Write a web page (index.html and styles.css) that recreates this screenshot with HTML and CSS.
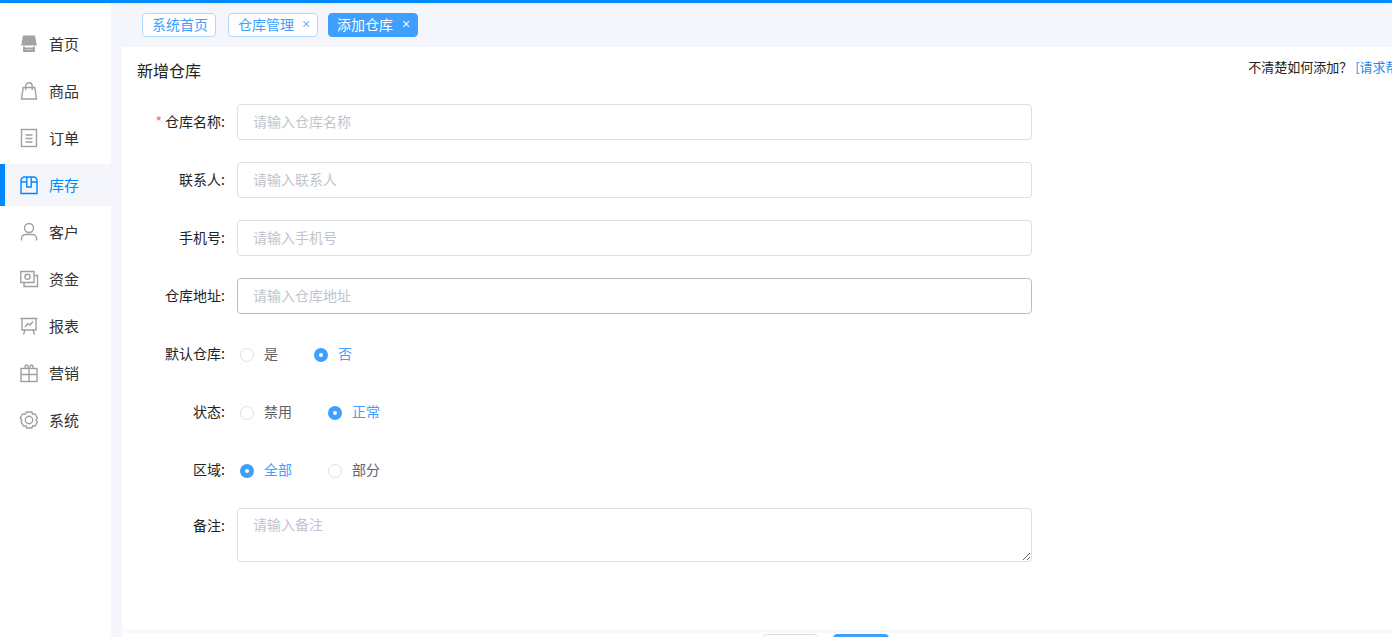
FILE: index.html
```html
<!DOCTYPE html>
<html lang="zh-CN">
<head>
<meta charset="utf-8">
<title>添加仓库</title>
<link rel="stylesheet" href="styles.css">
</head>
<body>
<div class="topline"></div>
<div class="app">
  <nav class="sidebar">
    <a class="nav-item"><svg class="ico" viewBox="0 0 18 18"><path class="solid" d="M3 0.5h12l1.8 10H1.2z"/><path class="thick" d="M4 11.5v4.5h10v-4.5M4 13.5h10"/></svg><span>首页</span></a>
    <a class="nav-item"><svg class="ico" viewBox="0 0 18 18"><path class="thin" d="M3.2 5.5h11.6l1.7 11.5H1.5z"/><path class="thin" d="M5.8 8V4a3.2 3.2 0 0 1 6.4 0v4"/></svg><span>商品</span></a>
    <a class="nav-item"><svg class="ico" viewBox="0 0 18 18"><rect class="thin" x="1.5" y="0.5" width="15" height="17"/><path class="thin" d="M5.5 6h7M5.5 9.5h7M5.5 13h7"/></svg><span>订单</span></a>
    <a class="nav-item active"><svg class="ico" viewBox="0 0 18 18"><path class="thin" d="M4.5 1h9a3.5 3.5 0 0 1 3.5 3.5v13H1v-13A3.5 3.5 0 0 1 4.5 1z"/><path class="thin" d="M1 6h5.8M11.2 6H17M6.8 1v10h4.4V1"/></svg><span>库存</span></a>
    <a class="nav-item"><svg class="ico" viewBox="0 0 18 18"><circle class="thin" cx="9" cy="5" r="4.5"/><path class="thin" d="M1.5 17.5v-2a4 4 0 0 1 4-4h7a4 4 0 0 1 4 4v2"/></svg><span>客户</span></a>
    <a class="nav-item"><svg class="ico" viewBox="0 0 18 18"><path class="thin" d="M14 12.5H0.8V1.5H14z"/><circle class="thin" cx="7.5" cy="6.8" r="2.6"/><path class="thin" d="M14.5 5.5h3v11H4v-3.5"/></svg><span>资金</span></a>
    <a class="nav-item"><svg class="ico" viewBox="0 0 18 18"><path class="thin" d="M0.5 1.5h17M2 1.5v11.5h14V1.5M5 13l-1.5 4.5M13 13l1.5 4.5"/><path class="thin" d="M5 10l3-3.5 2 1.5 3-3.5"/></svg><span>报表</span></a>
    <a class="nav-item"><svg class="ico" viewBox="0 0 18 18"><rect class="thin" x="1" y="4.5" width="16" height="13"/><path class="thin" d="M1 10.5h16M9 4.5v13M5 4.5V2.5a1.5 1.5 0 0 1 3 0v2M10 4.5V2.5a1.5 1.5 0 0 1 3 0v2"/></svg><span>营销</span></a>
    <a class="nav-item"><svg class="ico" viewBox="0 0 18 18"><path class="thin" d="M6.5 1h5l.8 2.2 2.4-.3 2.4 4-1.5 2.1 1.5 2.1-2.4 4-2.4-.3-.8 2.2h-5l-.8-2.2-2.4.3-2.4-4L1.4 9 -0.1 6.9l2.4-4 2.4.3z" transform="translate(.3 0)"/><circle class="thin" cx="9" cy="9" r="3.7"/></svg><span>系统</span></a>
  </nav>
  <div class="workspace">
    <div class="tabs">
      <span class="tag"><span class="tag-text">系统首页</span></span>
      <span class="tag"><span class="tag-text">仓库管理</span><i class="close">×</i></span>
      <span class="tag current"><span class="tag-text">添加仓库</span><i class="close">×</i></span>
    </div>
    <main class="panel">
      <header class="panel-head">
        <h1 class="panel-title">新增仓库</h1>
        <p class="hint">不清楚如何添加？<a class="help">[请求帮助]</a></p>
      </header>
      <form class="form">
        <div class="row"><label class="label"><em class="req">*</em>仓库名称:</label><input class="field" placeholder="请输入仓库名称"></div>
        <div class="row"><label class="label">联系人:</label><input class="field" placeholder="请输入联系人"></div>
        <div class="row"><label class="label">手机号:</label><input class="field" placeholder="请输入手机号"></div>
        <div class="row"><label class="label">仓库地址:</label><input class="field hover" placeholder="请输入仓库地址"></div>
        <div class="row"><label class="label">默认仓库:</label>
          <div class="radios"><span class="radio"><i class="dot"></i>是</span><span class="radio on"><i class="dot"></i>否</span></div></div>
        <div class="row"><label class="label">状态:</label>
          <div class="radios"><span class="radio"><i class="dot"></i>禁用</span><span class="radio on"><i class="dot"></i>正常</span></div></div>
        <div class="row"><label class="label">区域:</label>
          <div class="radios"><span class="radio on"><i class="dot"></i>全部</span><span class="radio"><i class="dot"></i>部分</span></div></div>
        <div class="row row-area"><label class="label">备注:</label><textarea class="field area" placeholder="请输入备注"></textarea></div>
      </form>
      <footer class="actions">
        <button class="btn" type="button" aria-label="取消"></button>
        <button class="btn primary" type="button" aria-label="保存"></button>
      </footer>
    </main>
  </div>
</div>
</body>
</html>
```
FILE: styles.css
```css
* { box-sizing: border-box; }
html, body { margin: 0; height: 637px; overflow: hidden; }
body {
  font-family: "Noto Sans CJK SC", "Liberation Sans", sans-serif;
  font-size: 14px;
  color: #222;
  background: #f5f6fb;
}
.topline { height: 3px; background: #0089ff; position: relative; box-shadow: 0 1px 3px rgba(0, 0, 0, .06); }
.app { display: flex; height: 634px; }

.sidebar {
  flex: 0 0 111px;
  background: #fff;
  padding-top: 20px;
  display: flex;
  flex-direction: column;
  gap: 5px;
}
.nav-item {
  height: 42px;
  display: flex;
  align-items: center;
  gap: 11px;
  padding-left: 20px;
  font-size: 15px;
  color: #333;
}
.nav-item span { margin-bottom: 2px; }
.nav-item.active {
  color: #0089ff;
  background: #f5f6fb;
  box-shadow: inset 5px 0 0 #0089ff;
}
.ico { width: 18px; height: 18px; flex: none; overflow: visible; }
.thin { fill: none; stroke: #a0a0a0; stroke-width: 1.4; }
.thick { fill: none; stroke: #a0a0a0; stroke-width: 1.8; }
.solid { fill: #a2a2a2; }
.active .thin { stroke: #0089ff; }

.workspace { flex: 0 0 1300px; margin-left: 11px; display: flex; flex-direction: column; }
.tabs {
  height: 44px;
  flex: none;
  display: flex;
  align-items: flex-start;
  padding: 10px 0 0 20px;
  gap: 12px;
}
.tag {
  height: 24px;
  display: flex;
  align-items: center;
  padding: 0 7px 0 9px;
  font-size: 14px;
  line-height: 1;
  color: #409eff;
  background: #fff;
  border: 1px solid #b3d8ff;
  border-radius: 4px;
}
.tag-text { margin-bottom: 2px; }
.tag.current { color: #fff; background: #409eff; border-color: #409eff; margin-left: -2px; padding-left: 8px; }
.tag.current .close { margin-left: 9px; opacity: .9; }
.close {
  display: flex;
  justify-content: center;
  font: normal 14px/1 "Liberation Sans", sans-serif;
  margin-left: 8px;
  width: 8px;
  margin-bottom: 2px;
  opacity: .75;
}

.panel { flex: 1; background: #fff; display: flex; flex-direction: column; overflow: hidden; }
.panel-head {
  height: 57px;
  flex: none;
  display: flex;
  justify-content: space-between;
  align-items: flex-start;
  padding: 12px 6px 0 15px;
}
.panel-title { margin: 0; font-size: 16px; font-weight: 400; line-height: 22px; color: #222; }
.hint { margin: -2px 0 0; font-size: 13px; line-height: 20px; color: #222; white-space: nowrap; }
.help { color: #1e8cf0; margin-left: 3px; }

.form { display: flex; flex-direction: column; gap: 22px; flex: none; }
.row { display: flex; height: 36px; align-items: center; }
.row-area { height: 54px; align-items: flex-start; margin-top: -2px; }
.label {
  flex: 0 0 103px;
  text-align: right;
  margin-right: 12px;
  margin-bottom: 2px;
  font-size: 14px;
  color: #222;
  line-height: 34px;
  white-space: nowrap;
}
.req { font-style: normal; color: #f56c6c; margin-right: 3px; }
.field {
  width: 795px;
  height: 36px;
  padding: 0 15px 2px;
  font: 14px "Noto Sans CJK SC", "Liberation Sans", sans-serif;
  color: #606266;
  background: #fff;
  border: 1px solid #dcdfe6;
  border-radius: 4px;
  outline: none;
}
.field::placeholder { color: #c0c4cc; opacity: 1; }
.field.hover { border-color: #b8bbc2; }
.area { height: 54px; padding: 3px 15px; line-height: 24px; resize: vertical; display: block; }

.radios { display: flex; gap: 36px; padding-left: 3px; }
.radio { display: flex; align-items: center; gap: 10px; padding-bottom: 2px; font-size: 14px; color: #606266; }
.dot {
  width: 14px;
  height: 14px;
  margin-top: 4px;
  border: 1px solid #dcdfe6;
  border-radius: 50%;
  background: #fff;
  display: block;
}
.radio.on { color: #409eff; }
.radio.on .dot { border: 5px solid #409eff; }

.actions {
  height: 36px;
  flex: none;
  margin-top: 67px;
  display: flex;
  gap: 14px;
  padding: 1px 0 0 641px;
  background: #fff;
  border-top: 4px solid #f9f9fb;
}
.btn {
  width: 56px;
  height: 36px;
  flex: none;
  border: 1px solid #dcdfe6;
  border-radius: 4px;
  background: #fff;
}
.btn.primary { background: #409eff; border-color: #409eff; }
```
